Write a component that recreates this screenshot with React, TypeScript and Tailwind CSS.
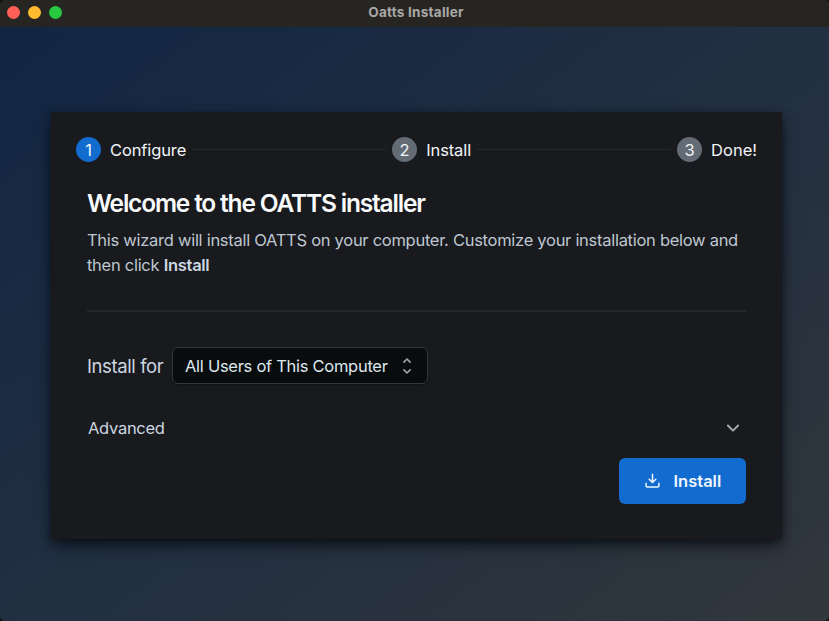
import React from "react";

type StepProps = { n: number; label: string; active?: boolean; labelClass?: string };

function Step({ n, label, active, labelClass = "" }: StepProps) {
  return (
    <div className="flex shrink-0 items-center">
      <span
        className={
          "flex h-[25px] w-[25px] items-center justify-center rounded-full pt-px text-[16.5px] leading-none text-[#f0f4f8] " +
          (active ? "bg-[#126bcf]" : "bg-[#636b74]")
        }
      >
        {n}
      </span>
      <span className={"ml-[9px] whitespace-nowrap pt-px text-[16.5px] leading-[24px] text-[#f0f4f8] " + labelClass}>{label}</span>
    </div>
  );
}

export default function App() {
  return (
    <div className="bg-[#12100e]">
      <div className="flex h-[621px] w-[829px] flex-col overflow-hidden rounded-[5px] bg-[linear-gradient(to_bottom_right,#112543,#212f41_50%,#31373c)] font-['Inter','Liberation_Sans',sans-serif]">
        <header className="grid h-[27px] shrink-0 grid-cols-[1fr_auto_1fr] items-center bg-[#262522]">
          <div className="flex gap-[8px] pb-[2px] pl-[7px]">
            <span className="h-[13px] w-[13px] rounded-full bg-[#ff5f57]" />
            <span className="h-[13px] w-[13px] rounded-full bg-[#febc2e]" />
            <span className="h-[13px] w-[13px] rounded-full bg-[#28c840]" />
          </div>
          <h1 className="pb-[3px] pl-[3px] text-[13.5px] font-bold leading-[20px] tracking-[0.25px] text-[#a9a8a6]">Oatts Installer</h1>
        </header>

        <main className="ml-[51px] mt-[85px] h-[427px] w-[731px] bg-[#191a1d] pl-[25px] pr-[25px] pt-[25px] shadow-[0_2px_8px_rgba(5,8,12,0.45),0_8px_16px_-4px_rgba(5,8,12,0.8)]">
          <div className="flex items-center gap-[6px]">
            <Step n={1} label="Configure" active labelClass="tracking-[-0.12px]" />
            <span className="h-px flex-1 bg-[#26282c]" />
            <Step n={2} label="Install" labelClass="tracking-[-0.1px]" />
            <span className="h-px flex-1 bg-[#26282c]" />
            <Step n={3} label="Done!" />
          </div>

          <section className="pl-[11px] pr-[11px]">
            <h2 className="mt-[24px] whitespace-nowrap text-[24.5px] font-semibold leading-[34px] tracking-[-1.18px] text-[#f8fafc]">
              Welcome to the OATTS installer
            </h2>
            <p className="mt-[8px] whitespace-nowrap text-[16.5px] leading-[25px] tracking-[-0.28px] text-[#bec7d1]">
              This wizard will install OATTS on your computer. Customize your installation below and
              <br />
              then click <strong className="font-semibold text-[#cdd7e1]">Install</strong>
            </p>
            <hr className="mt-[32px] h-[2px] border-0 bg-[#25272c]" />

            <div className="mt-[35px] flex items-center">
              <label className="w-[85px] whitespace-nowrap text-[18.5px] leading-[28px] tracking-[-0.4px] text-[#cdd7e1]">Install for</label>
              <button className="flex h-[37px] w-[256px] items-center justify-between rounded-[6px] border border-[#32383e] bg-[#090c0d] pl-[12px] pr-[14px] text-[16.5px] text-[#dde7ee] shadow-[0_1px_2px_rgba(0,0,0,0.35)]">
                <span className="whitespace-nowrap pt-[2px] tracking-[-0.28px]">All Users of This Computer</span>
                <svg className="h-[18px] w-[12px]" viewBox="0 0 12 18" fill="none" stroke="#9fa6ad" strokeWidth="1.6" strokeLinecap="round" strokeLinejoin="round">
                  <path d="M2.9 5.1 6 2l3.1 3.1M2.9 12.9 6 16l3.1-3.1" />
                </svg>
              </button>
            </div>

            <button className="mt-[31px] flex h-[25px] w-full items-center justify-between pl-px pr-[6px] text-[16.5px] text-[#cdd7e1]">
              <span className="pt-[2px] tracking-[-0.28px]">Advanced</span>
              <svg className="h-[12px] w-[14px]" viewBox="0 0 14 12" fill="none" stroke="#a4a9af" strokeWidth="2" strokeLinecap="round" strokeLinejoin="round">
                <path d="m1.9 3.5 5.1 5.1 5.1-5.1" />
              </svg>
            </button>

            <div className="mt-[18px] flex justify-end">
              <button className="flex h-[46px] w-[127px] items-center rounded-[6px] bg-[#126bcf] pl-[26px] text-[16.5px] font-semibold text-[#f0f6fc]">
                <svg className="h-[16px] w-[16px] shrink-0" viewBox="0 0 16 16" fill="none" stroke="currentColor" strokeWidth="1.5" strokeLinecap="round" strokeLinejoin="round">
                  <path d="M7.5 1.2v8M4.2 6.3l3.3 3.2 3.3-3.2M1.1 10.2v2.6c0 .7.5 1.2 1.2 1.2h10.4c.7 0 1.2-.5 1.2-1.2v-2.6" />
                </svg>
                <span className="ml-[12.5px]">Install</span>
              </button>
            </div>
          </section>
        </main>
      </div>
    </div>
  );
}
